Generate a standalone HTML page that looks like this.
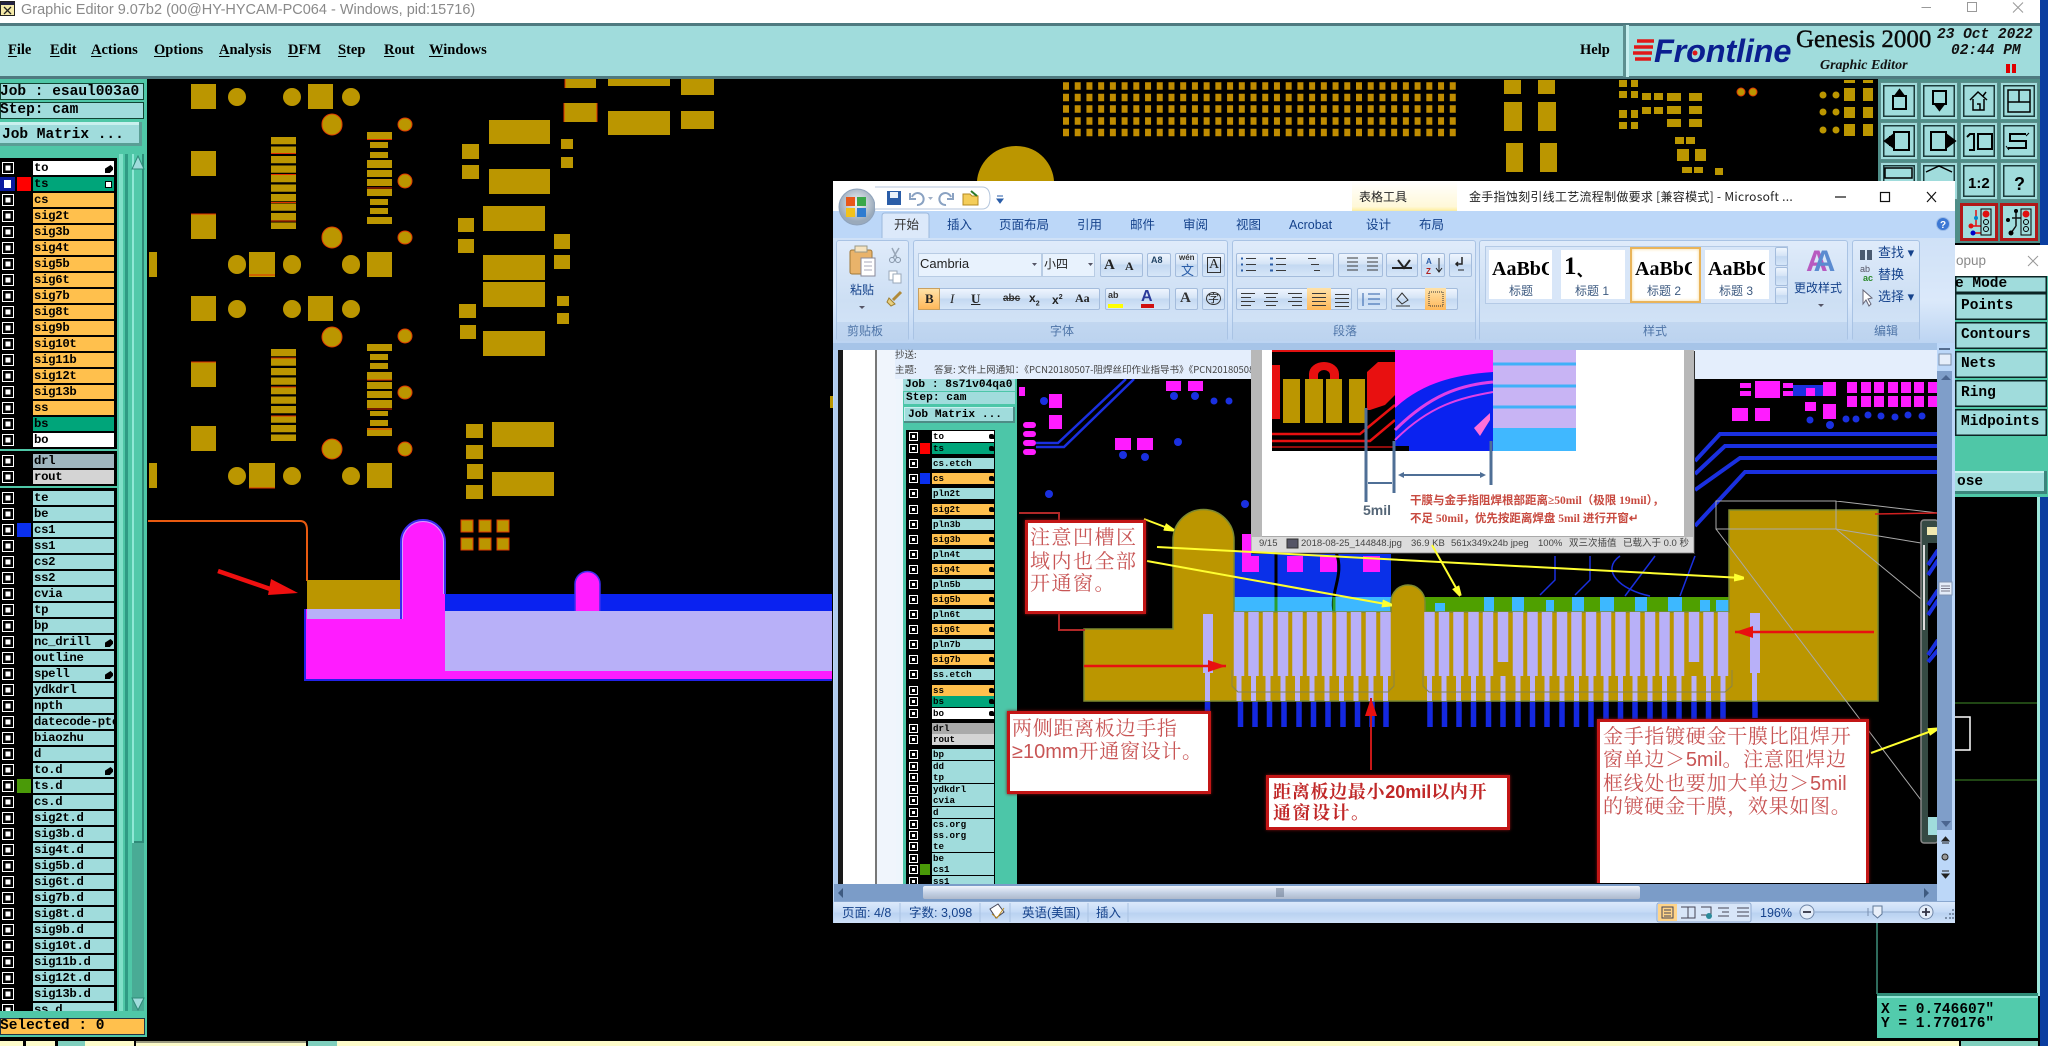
<!DOCTYPE html>
<html lang="zh"><head><meta charset="utf-8"><title>Graphic Editor</title>
<style>
html,body{margin:0;padding:0;background:#000;width:2048px;height:1046px;overflow:hidden}
div,svg,span.a{position:absolute}
svg{left:0;top:0}
.w{position:absolute;white-space:nowrap;line-height:1}
.m{font:bold 14.5px/15px "Liberation Serif",serif;color:#000;top:43px}
.m u{text-underline-offset:2px}
.j{font:bold 14.5px/17px "Liberation Mono",monospace;color:#000;white-space:nowrap;overflow:hidden;background:#a0dcdc}
.r{left:0;width:116px;height:14px}
.c{left:2px;top:1px;width:12px;height:12px;background:#fff;box-shadow:inset 0 0 0 1px #fff,inset 0 0 0 3.5px #000}
.s{left:17px;top:0;width:14px;height:14px}
.t{left:33px;top:0;width:80px;height:14px;padding-left:1px;background:#a0dcdc;font:bold 12.3px/14px "Liberation Mono",monospace;letter-spacing:-.3px;color:#000;overflow:hidden;white-space:nowrap}
.o{background:#ffc04d}.g{background:#00a57a}.wh{background:#fff}
.h{right:1px;top:4px;width:8px;height:8px;background:#000;clip-path:polygon(0 100%,0 45%,55% 10%,70% 0,100% 30%,100% 60%,60% 100%)}
.e{left:906px;width:89px;height:11px}
.e i{position:absolute;left:3px;top:1px;width:9px;height:9px;background:#fff;box-shadow:inset 0 0 0 1px #fff,inset 0 0 0 3px #000}
.e b{position:absolute;left:26px;top:0;width:62px;height:11px;background:#a0dcdc;font:bold 9.2px/11px "Liberation Mono",monospace;color:#000;padding-left:1px;box-sizing:border-box;overflow:hidden;white-space:nowrap}
.e b.o{background:#ffc04d}.e b.g{background:#00a57a}.e b.wh{background:#fff}
.e .sw{position:absolute;left:14px;top:0;width:10px;height:11px}
.e u{position:absolute;left:83px;top:3px;width:5px;height:5px;background:#000;border-radius:2px 2px 0 2px}
.tb{width:38px;height:38px;background:#a0dcdc;box-shadow:inset 0 0 0 1px #5d8f8d,inset 0 0 0 3px #a0dcdc,inset 0 0 0 4.5px #1c3a3a}
.bt{background:linear-gradient(#eef5fe,#d5e4f6 45%,#c3d8f1 50%,#d6e6f8);border:1px solid #a4bcdc;border-radius:2px;box-sizing:border-box}
.gr{background:linear-gradient(#dfebfa,#cddff4 60%,#d4e4f7);border:1px solid #a9c3e4;border-radius:3px;box-sizing:border-box}
.gt{background:linear-gradient(#c2d7f0,#bcd3ef);height:19px}
.n{font-family:"Liberation Sans","Noto Sans CJK SC",sans-serif}
.sc{font-family:"Noto Sans CJK SC","Liberation Sans",sans-serif}
.lb{font:12px/12px "Liberation Sans","Noto Sans CJK SC",sans-serif;color:#15428b}
.tab{font:12.5px/13px "Liberation Sans","Noto Sans CJK SC",sans-serif;color:#15428b;top:219px}
.gl{font:12px/12px "Liberation Sans","Noto Sans CJK SC",sans-serif;color:#4f75a8;top:325px}
.aa{font:bold 20px/24px "Liberation Serif",serif;color:#000;overflow:hidden;white-space:nowrap}
.box{background:#fff;border:3px solid #c31616;box-sizing:border-box;box-shadow:0 0 3px #801010}
.cn{font:20px/22px "Noto Serif CJK SC","Liberation Serif",serif;color:#c85555;letter-spacing:.7px;white-space:nowrap;position:absolute}
.cn span{font-family:"Liberation Sans",sans-serif;letter-spacing:0}
.st{font:9.5px/12px "Liberation Sans","Noto Sans CJK SC",sans-serif;color:#444;top:538px}
.sb{font:12.5px/14px "Liberation Sans","Noto Sans CJK SC",sans-serif;color:#15428b;top:906px}
.pb{left:1955px;width:92px;height:27px;background:#a0dcdc;box-shadow:inset 0 0 0 1.5px #0c2424;font:bold 14.5px/27px "Liberation Mono",monospace;color:#000;white-space:nowrap;overflow:hidden}
.pb span{position:absolute;left:6px}
</style></head><body>

<!-- main canvas -->
<svg width="2048" height="1046" viewBox="0 0 2048 1046">
<rect width="2048" height="1046" fill="#000"/>
<g fill="#bb9600">
<path d="M191 84H216V109H191zM308 84H333V109H308zM191 151H216V176H191zM191 214H216V239H191zM149 252H157V277H149zM249 252H275V277H249zM367 252H392V277H367zM191 296H216V321H191zM308 296H333V321H308zM191 362H216V387H191zM191 426H216V451H191zM149 463H157V488H149zM249 463H275V488H249zM367 463H392V488H367z"/>
<path d="M367 132H392V139H367zM370 142H388V148H370zM370 152H388V158H370zM367 160H392V168H367zM367 170H392V177H367zM367 179H392V186H367zM367 189H392V196H367zM370 199H388V205H370zM370 208H388V214H370zM367 217H392V224H367zM367 344H392V351H367zM370 354H388V360H370zM370 363H388V369H370zM367 372H392V380H367zM367 382H392V389H367zM367 391H392V398H367zM367 400H392V408H367zM370 411H388V416H370zM370 420H388V426H370zM367 428H392V436H367z"/>
<path d="M565 79H596V88H565zM608 79H670V86H608zM681 79H714V95H681zM564 103H597V122H564zM608 111H670V135H608zM681 111H714V129H681zM489 120H550V144H489zM561 139H573V149H561zM561 157H573V168H561zM462 144H479V159H462zM462 165H479V179H462zM489 169H550V194H489zM483 206H545V231H483zM458 218H474V232H458zM458 239H474V253H458zM554 234H570V249H554zM554 255H570V269H554zM483 255H545V280H483zM483 282H545V307H483zM459 304H476V318H459zM460 325H476V339H460zM557 296H569V306H557zM557 313H569V324H557zM483 331H545V356H483zM466 424H483V438H466zM466 445H483V459H466zM467 464H483V479H467zM466 485H483V499H466zM492 422H554V447H492zM492 472H554V496H492z"/>
<path d="M1504 80H1521V94H1504zM1538 80H1555V94H1538zM1504 102H1522V131H1504zM1538 102H1556V131H1538zM1506 143H1523V172H1506zM1540 143H1557V172H1540z"/>
<path d="M1619 80H1627V87H1619zM1631 80H1638V87H1631zM1619 91H1627V98H1619zM1631 91H1638V98H1631zM1642 93H1651V100H1642zM1654 93H1663V100H1654zM1667 93H1681V101H1667zM1689 93H1702V101H1689zM1619 110H1627V118H1619zM1631 110H1638V118H1631zM1642 107H1651V114H1642zM1654 107H1663V114H1654zM1667 106H1681V114H1667zM1689 106H1702V114H1689zM1619 122H1627V129H1619zM1631 122H1638V129H1631zM1667 119H1681V127H1667zM1689 119H1702V127H1689zM1675 137H1684V144H1675zM1686 137H1695V144H1686zM1677 149H1689V161H1677zM1695 149H1706V161H1695zM1682 167H1692V173H1682zM1694 167H1703V173H1694zM1715 168H1723V175H1715zM1844 80H1855V83H1844zM1863 80H1873V83H1863zM1844 88H1855V101H1844zM1863 88H1873V101H1863zM1844 107H1855V118H1844zM1863 107H1873V118H1863zM1844 124H1855V136H1844zM1863 124H1873V136H1863z"/>
</g>
<g fill="none" stroke="#bb9600" stroke-width="25">
<path d="M283.5 137V229" stroke-dasharray="7.2 2.3"/><path d="M283.5 349V441" stroke-dasharray="7.2 2.3"/>
</g>
<g fill="#bb9600" stroke="#e03a00" stroke-width="1">
<rect x="322" y="114" width="20" height="21" rx="10" ry="10"/><rect x="398" y="118" width="14" height="13" rx="7"/><rect x="398" y="174" width="14" height="14" rx="7"/><rect x="322" y="227" width="20" height="21" rx="10"/><rect x="398" y="231" width="14" height="13" rx="7"/><rect x="322" y="327" width="20" height="20" rx="10"/><rect x="398" y="329" width="14" height="14" rx="7"/><rect x="398" y="386" width="14" height="13" rx="7"/><rect x="322" y="439" width="20" height="20" rx="10"/><rect x="398" y="442" width="14" height="14" rx="7"/>
<path d="M461 520H473V532H461zM479 520H491V532H479zM497 520H509V532H497zM461 538H473V550H461zM479 538H491V550H479zM497 538H509V550H497z"/>
</g>
<g fill="#bb9600">
<rect x="228" y="88" width="18" height="18" rx="9"/><rect x="283" y="88" width="18" height="18" rx="9"/><rect x="342" y="88" width="18" height="18" rx="9"/>
<rect x="228" y="255" width="18" height="19" rx="9"/><rect x="283" y="255" width="18" height="19" rx="9"/><rect x="342" y="255" width="18" height="19" rx="9"/>
<rect x="228" y="300" width="18" height="18" rx="9"/><rect x="283" y="300" width="18" height="18" rx="9"/><rect x="342" y="300" width="18" height="18" rx="9"/>
<rect x="228" y="467" width="18" height="18" rx="9"/><rect x="283" y="467" width="18" height="18" rx="9"/><rect x="342" y="467" width="18" height="18" rx="9"/>
<path d="M977 181C978 165 992 146 1016 146C1040 146 1053 165 1054 181V190H977z"/>
<circle cx="1741" cy="92" r="4" stroke="#e03a00"/><circle cx="1753" cy="92" r="4" stroke="#e03a00"/>
<circle cx="1823" cy="95" r="3.5"/><circle cx="1836" cy="95" r="3.5"/><circle cx="1823" cy="112" r="3.5"/><circle cx="1836" cy="112" r="3.5"/><circle cx="1823" cy="130" r="3.5"/><circle cx="1836" cy="130" r="3.5"/>
</g>
<g fill="none" stroke-width="7.5" stroke-dasharray="6 5.72">
<path stroke="#c08c00" d="M1063 86H1460M1063 97.5H1460M1063 109H1460M1063 121H1460M1063 132.500H1460"/>
</g>
<g fill="none" stroke="#e03000" stroke-width="1">
<path d="M191 214H216M191 362H216M271 153.500H296M271 174.500H296M271 202.500H296M271 221H296M271 358H296M271 387H296M271 416H296M367 139.500H392M367 188H392M367 380H392M367 409H392M367 429H392M249 275H275M249 488H275M565 79V88M564 103V122M597 103V122"/>
</g>
<path d="M148 521H300Q307 521 307 530V581" fill="none" stroke="#e85a10" stroke-width="2"/>
<rect x="307" y="580" width="93" height="29" fill="#bb9600"/>
<rect x="305" y="609" width="527" height="71" fill="#ff1cff"/>
<path d="M305 609V680H832" fill="none" stroke="#2222e8" stroke-width="2"/>
<rect x="307" y="609" width="93" height="10" fill="#b8b0f8"/>
<rect x="445" y="594" width="387" height="17" fill="#0a22f0"/>
<rect x="444" y="611" width="388" height="60" fill="#b8b0f8"/>
<path d="M401 620V542A22 22 0 0 1 445 542V673H401z" fill="#ff1cff"/>
<path d="M401 619V542A22 22 0 0 1 445 542V594" fill="none" stroke="#3a2cf0" stroke-width="2"/>
<path d="M402.500 619V542A20.500 20.500 0 0 1 443.500 542V594" fill="none" stroke="#d0a0ff" stroke-width="1"/>
<path d="M575 611V584A12.500 12.500 0 0 1 600 584V611z" fill="#ff1cff"/>
<path d="M575 611V584A12.500 12.500 0 0 1 600 584V611" fill="none" stroke="#3a2cf0" stroke-width="1.500"/>
<path d="M218 571L276 591" stroke="#f01010" stroke-width="4.500"/><path d="M298 593L271 579L268 595z" fill="#f01010"/>
<rect x="830" y="396" width="3" height="12" fill="#bb9600"/>
<!-- canvas right -->
<path d="M1955 703H2037M1955 780H2037" stroke="#3f8c28" stroke-width="1"/>
<path d="M1955 717H1970V750H1955" fill="none" stroke="#fff" stroke-width="1.500"/>
<path d="M1877 923V994" stroke="#3d8f7a" stroke-width="1.500"/>
</svg>

<!-- title bar -->
<div style="left:0;top:0;width:2040px;height:23px;background:#fff"></div>
<div style="left:2040px;top:0;width:8px;height:1046px;background:#0a3ea0"></div>
<svg width="16" height="16" style="left:0;top:1px"><rect x=".5" y=".5" width="14" height="14" fill="#f4e9a8" stroke="#222"/><rect x="1" y="1" width="13" height="3" fill="#224"/><path d="M4 6L11 13M11 6L4 13" stroke="#222" stroke-width="1.300"/></svg>
<span class="w n" style="left:21px;top:3px;font-size:14.500px;color:#8a8a8a">Graphic Editor 9.07b2 (00@HY-HYCAM-PC064 - Windows, pid:15716)</span>
<svg width="2048" height="23"><path d="M1921.500 7.500H1931" stroke="#999"/><rect x="1967.500" y="2.500" width="9" height="9" fill="none" stroke="#999"/><path d="M2013 2.500L2023 12.500M2023 2.500L2013 12.500" stroke="#999"/></svg>

<!-- menu bar -->
<div style="left:0;top:23px;width:2040px;height:3px;background:#4f7a80"></div>
<div style="left:0;top:26px;width:2040px;height:50px;background:#a0dcdc"></div>
<div style="left:0;top:76px;width:2040px;height:3px;background:#4f7a80"></div>
<div style="left:1623px;top:25px;width:3px;height:52px;background:#5d8f90"></div>
<div style="left:1626px;top:25px;width:3px;height:52px;background:#c6efef"></div>
<span class="w m" style="left:8px"><u>F</u>ile</span>
<span class="w m" style="left:50px"><u>E</u>dit</span>
<span class="w m" style="left:91px"><u>A</u>ctions</span>
<span class="w m" style="left:154px"><u>O</u>ptions</span>
<span class="w m" style="left:219px"><u>A</u>nalysis</span>
<span class="w m" style="left:288px"><u>D</u>FM</span>
<span class="w m" style="left:338px"><u>S</u>tep</span>
<span class="w m" style="left:384px"><u>R</u>out</span>
<span class="w m" style="left:429px"><u>W</u>indows</span>
<span class="w m" style="left:1580px">Help</span>

<!-- logo -->
<svg width="2048" height="80"><path d="M1637 41H1654M1634 47H1653M1633 53H1652M1635 59H1651" stroke="#e01818" stroke-width="3.500"/></svg>
<span class="w" style="left:1654px;top:34px;font:italic bold 32.500px/34px 'Liberation Sans',sans-serif;color:#0b1f90;letter-spacing:-.2px">Frontline</span>
<svg width="2048" height="80"><circle cx="1695" cy="53" r="2.500" fill="#e01818"/></svg>
<span class="w" style="left:1796px;top:27px;font:25px/26px 'Liberation Serif',serif;color:#0a0a0a;-webkit-text-stroke:.4px #0a0a0a">Genesis 2000</span>
<span class="w" style="left:1820px;top:58px;font:italic bold 14px/15px 'Liberation Serif',serif;color:#111">Graphic Editor</span>
<span class="w" style="left:1937px;top:27px;font:italic bold 14.500px/16px 'Liberation Mono',monospace;color:#111">23 Oct 2022</span>
<span class="w" style="left:1951px;top:43px;font:italic bold 14.500px/16px 'Liberation Mono',monospace;color:#111">02:44 PM</span>
<div style="left:2006px;top:64px;width:4px;height:9px;background:#e00000"></div><div style="left:2012px;top:64px;width:4px;height:9px;background:#e00000"></div>

<!-- left panel -->
<div style="left:0;top:79px;width:147px;height:958px;background:#4fc7a7"></div>
<div class="j" style="left:0;top:83px;width:144px;height:17px;box-shadow:inset 0 0 0 1px #143;"><span class="a" style="left:0;top:1px">Job : esaul003a0</span></div>
<div class="j" style="left:0;top:102px;width:144px;height:17px;box-shadow:inset 0 0 0 1px #143"><span class="a" style="left:0">Step: cam</span></div>
<div class="j" style="left:0;top:122px;width:142px;height:24px;line-height:24px;box-shadow:inset -3px -3px 0 #5a9e95,inset 0 3px 0 #c8f0ee"><span class="a" style="left:2px;top:1px">Job Matrix ...</span></div>
<div style="left:0;top:158px;width:117px;height:291px;background:#000"></div>
<div style="left:0;top:451px;width:117px;height:35px;background:#000"></div>
<div style="left:0;top:488px;width:117px;height:523px;background:#000"></div>
<div style="left:119px;top:154px;width:4px;height:857px;background:#7fe0c8"></div>
<div style="left:125px;top:154px;width:3px;height:857px;background:#2f9b84"></div>
<div style="left:132px;top:154px;width:12px;height:857px;background:#49ab95"></div>
<div style="left:132px;top:154px;width:12px;height:689px;background:#52c9aa;box-shadow:inset 2px 0 0 #8fe8d6,inset -2px -2px 0 #2f8a78"></div>
<svg width="147" height="1040"><path d="M138 156L144 169H132z" fill="#a0dcdc" stroke="#2f8a78"/><path d="M138 1010L144 998H132z" fill="#a0dcdc" stroke="#2f8a78"/></svg>

<div class="r" style="top:161px"><div class="c"></div><div class="t wh">to<div class="h"></div></div></div>
<div class="r" style="top:177px"><div style="left:0;top:0;width:15px;height:14px;background:#0a1aa0"></div><div class="c" style="box-shadow:none;left:4px;top:3px;width:7px;height:8px"></div><div class="s" style="background:#f00"></div><div class="t g">ts<div style="right:2px;top:4px;width:5px;height:5px;border:1px solid #000;background:#fff"></div></div></div>
<div class="r" style="top:193px"><div class="c"></div><div class="t o">cs</div></div>
<div class="r" style="top:209px"><div class="c"></div><div class="t o">sig2t</div></div>
<div class="r" style="top:225px"><div class="c"></div><div class="t o">sig3b</div></div>
<div class="r" style="top:241px"><div class="c"></div><div class="t o">sig4t</div></div>
<div class="r" style="top:257px"><div class="c"></div><div class="t o">sig5b</div></div>
<div class="r" style="top:273px"><div class="c"></div><div class="t o">sig6t</div></div>
<div class="r" style="top:289px"><div class="c"></div><div class="t o">sig7b</div></div>
<div class="r" style="top:305px"><div class="c"></div><div class="t o">sig8t</div></div>
<div class="r" style="top:321px"><div class="c"></div><div class="t o">sig9b</div></div>
<div class="r" style="top:337px"><div class="c"></div><div class="t o">sig10t</div></div>
<div class="r" style="top:353px"><div class="c"></div><div class="t o">sig11b</div></div>
<div class="r" style="top:369px"><div class="c"></div><div class="t o">sig12t</div></div>
<div class="r" style="top:385px"><div class="c"></div><div class="t o">sig13b</div></div>
<div class="r" style="top:401px"><div class="c"></div><div class="t o">ss</div></div>
<div class="r" style="top:417px"><div class="c"></div><div class="t g">bs</div></div>
<div class="r" style="top:433px"><div class="c"></div><div class="t wh">bo</div></div>
<div class="r" style="top:454px"><div class="c"></div><div class="t" style="background:#9fb6bf">drl</div></div>
<div class="r" style="top:470px"><div class="c"></div><div class="t" style="background:#d4d4d4">rout</div></div>
<div class="r" style="top:491px"><div class="c"></div><div class="t">te</div></div>
<div class="r" style="top:507px"><div class="c"></div><div class="t">be</div></div>
<div class="r" style="top:523px"><div class="c"></div><div class="s" style="background:#0a30f0"></div><div class="t">cs1</div></div>
<div class="r" style="top:539px"><div class="c"></div><div class="t">ss1</div></div>
<div class="r" style="top:555px"><div class="c"></div><div class="t">cs2</div></div>
<div class="r" style="top:571px"><div class="c"></div><div class="t">ss2</div></div>
<div class="r" style="top:587px"><div class="c"></div><div class="t">cvia</div></div>
<div class="r" style="top:603px"><div class="c"></div><div class="t">tp</div></div>
<div class="r" style="top:619px"><div class="c"></div><div class="t">bp</div></div>
<div class="r" style="top:635px"><div class="c"></div><div class="t">nc_drill<div class="h"></div></div></div>
<div class="r" style="top:651px"><div class="c"></div><div class="t">outline</div></div>
<div class="r" style="top:667px"><div class="c"></div><div class="t">spell<div class="h"></div></div></div>
<div class="r" style="top:683px"><div class="c"></div><div class="t">ydkdrl</div></div>
<div class="r" style="top:699px"><div class="c"></div><div class="t">npth</div></div>
<div class="r" style="top:715px"><div class="c"></div><div class="t">datecode-ptc</div></div>
<div class="r" style="top:731px"><div class="c"></div><div class="t">biaozhu</div></div>
<div class="r" style="top:747px"><div class="c"></div><div class="t">d</div></div>
<div class="r" style="top:763px"><div class="c"></div><div class="t">to.d<div class="h"></div></div></div>
<div class="r" style="top:779px"><div class="c"></div><div class="s" style="background:#4a9a08"></div><div class="t">ts.d</div></div>
<div class="r" style="top:795px"><div class="c"></div><div class="t">cs.d</div></div>
<div class="r" style="top:811px"><div class="c"></div><div class="t">sig2t.d</div></div>
<div class="r" style="top:827px"><div class="c"></div><div class="t">sig3b.d</div></div>
<div class="r" style="top:843px"><div class="c"></div><div class="t">sig4t.d</div></div>
<div class="r" style="top:859px"><div class="c"></div><div class="t">sig5b.d</div></div>
<div class="r" style="top:875px"><div class="c"></div><div class="t">sig6t.d</div></div>
<div class="r" style="top:891px"><div class="c"></div><div class="t">sig7b.d</div></div>
<div class="r" style="top:907px"><div class="c"></div><div class="t">sig8t.d</div></div>
<div class="r" style="top:923px"><div class="c"></div><div class="t">sig9b.d</div></div>
<div class="r" style="top:939px"><div class="c"></div><div class="t">sig10t.d</div></div>
<div class="r" style="top:955px"><div class="c"></div><div class="t">sig11b.d</div></div>
<div class="r" style="top:971px"><div class="c"></div><div class="t">sig12t.d</div></div>
<div class="r" style="top:987px"><div class="c"></div><div class="t">sig13b.d</div></div>
<div class="r" style="top:1003px;height:8px;overflow:hidden"><div class="c"></div><div class="t">ss.d</div></div>
<div style="left:0;top:1011px;width:147px;height:5px;background:#4fc7a7"></div>
<div class="j" style="left:0;top:1018px;width:145px;height:17px;background:#ffc04d;box-shadow:inset 0 0 0 1px #234"><span class="a" style="left:0">Selected : 0</span></div>

<!-- bottom strip -->
<div style="left:0;top:1041px;width:1959px;height:5px;background:#fdfccb"></div>
<div style="left:23px;top:1041px;width:3px;height:5px;background:#000"></div>
<div style="left:55px;top:1041px;width:3px;height:5px;background:#000"></div>
<div style="left:58px;top:1041px;width:27px;height:5px;background:#7fcfbd"></div>
<div style="left:134px;top:1041px;width:2px;height:5px;background:#000"></div>
<div style="left:136px;top:1041px;width:170px;height:2px;background:#9a9a80"></div>
<div style="left:306px;top:1041px;width:2px;height:5px;background:#000"></div>
<div style="left:308px;top:1041px;width:29px;height:5px;background:#7fcfbd"></div>
<div style="left:1961px;top:1041px;width:77px;height:5px;background:#7fcfbd"></div>

<!-- toolbox -->
<div style="left:1878px;top:79px;width:162px;height:164px;background:#4f8e88"></div>
<div class="tb" style="left:1880px;top:82px"></div><div class="tb" style="left:1920px;top:82px"></div><div class="tb" style="left:1960px;top:82px"></div><div class="tb" style="left:2000px;top:82px"></div>
<div class="tb" style="left:1880px;top:122px"></div><div class="tb" style="left:1920px;top:122px"></div><div class="tb" style="left:1960px;top:122px"></div><div class="tb" style="left:2000px;top:122px"></div>
<div class="tb" style="left:1880px;top:162px"></div><div class="tb" style="left:1920px;top:162px"></div><div class="tb" style="left:1960px;top:162px"></div><div class="tb" style="left:2000px;top:162px"></div>
<div class="tb" style="left:1960px;top:203px;background:#a0dcdc;box-shadow:inset 0 0 0 3px #b01818"></div><div class="tb" style="left:2000px;top:203px;box-shadow:inset 0 0 0 3px #b01818"></div>
<svg width="2048" height="250" fill="none" stroke="#000" stroke-width="2">
<path d="M1893 96H1906V109H1893z"/><path d="M1899.500 90L1904 96H1895z" fill="#000"/>
<path d="M1933 91H1946V104H1933z"/><path d="M1939.500 110L1935 104H1944z" fill="#000"/>
<path d="M1970 100L1978 92L1987 100M1973 99V110H1984V99M1977 104H1980V110M1986 92L1983 96" stroke-width="1.500"/>
<path d="M2008 90H2030V112H2008zM2019 90V102M2008 102H2030" stroke-width="1.500"/>
<path d="M1894 132H1909V150H1894z"/><path d="M1885 141L1893 135V147z" fill="#000"/><rect x="1890" y="137" width="4" height="8" fill="#000"/>
<path d="M1931 132H1946V150H1931z"/><path d="M1955 141L1947 135V147z" fill="#000"/>
<path d="M1978 134H1992V149H1978zM1967 137L1970 134H1974V150H1969" />
<path d="M2026 134H2010V141H2026V148H2008" /><path d="M2029 133L2026 136M2006 146L2009 150" stroke-width="1"/>
<text x="1968" y="188" font-family="Liberation Sans" font-size="15" font-weight="bold" fill="#000" stroke="none">1:2</text>
<text x="2014" y="190" font-family="Liberation Sans" font-size="18" font-weight="bold" fill="#000" stroke="none">?</text>
<path d="M1885 168H1912V178H1885zM1926 172L1939 166L1952 172" stroke-width="1.500"/>
<!-- pcb -->
<path d="M1967 209H1992V236H1967z" stroke="none" fill="#a0dcdc"/>
<path d="M1976 210V226M1969 226H1982V233M1974 233H1982" stroke="#e01010" stroke-width="1.500"/>
<circle cx="1976" cy="218" r="2" fill="#08c" stroke="none"/><circle cx="1971" cy="226" r="2.500" fill="#e01010" stroke="none"/><circle cx="1973" cy="233" r="2.500" fill="#00c" stroke="none"/>
<rect x="1981" y="209" width="10" height="26" fill="#a0dcdc" stroke="#000" stroke-width="1"/><circle cx="1986" cy="214" r="3.500" fill="#e01010" stroke="none"/><circle cx="1986" cy="222" r="2.500" stroke-width="1"/><circle cx="1986" cy="229" r="2.500" stroke-width="1"/>
<path d="M2016 209V226M2011 233L2016 226M2012 218H2022" stroke="#111" stroke-width="1.500"/>
<circle cx="2016" cy="211" r="2" fill="#000" stroke="none"/><circle cx="2008" cy="220" r="2" fill="#000" stroke="none"/><circle cx="2011" cy="233" r="2.500" fill="#000" stroke="none"/>
<rect x="2021" y="209" width="10" height="26" fill="#a0dcdc" stroke="#000" stroke-width="1"/><circle cx="2026" cy="214" r="3.500" fill="#e01010" stroke="none"/><circle cx="2026" cy="222" r="2.500" stroke-width="1"/><circle cx="2026" cy="229" r="2.500" stroke-width="1"/>
</svg>

<!-- popup -->
<div style="left:1955px;top:245px;width:93px;height:31px;background:#fff"></div>
<span class="w n" style="left:1956px;top:254px;font-size:13.500px;color:#8a8a8a">opup</span>
<svg width="2048" height="280"><path d="M2028 256L2038 266M2038 256L2028 266" stroke="#999"/></svg>
<div style="left:1955px;top:276px;width:93px;height:221px;background:#4fc7a7"></div>
<div class="pb" style="top:276px;height:17px;line-height:17px;width:92px"><span style="left:0">e Mode</span></div>
<div class="pb" style="top:293px"><span>Points</span></div>
<div class="pb" style="top:322px"><span>Contours</span></div>
<div class="pb" style="top:351px"><span>Nets</span></div>
<div class="pb" style="top:380px"><span>Ring</span></div>
<div class="pb" style="top:409px"><span>Midpoints</span></div>
<div class="pb" style="top:471px;height:23px;line-height:23px;box-shadow:inset -3px -3px 0 #3c857c,inset 0 2px 0 #c8f0ee"><span style="left:2px">ose</span></div>
<div style="left:2037px;top:497px;width:3px;height:499px;background:#9fe8dc"></div>

<!-- XY box -->
<div style="left:1877px;top:993px;width:161px;height:45px;background:#52cbac;box-shadow:inset 0 3px 0 #2f8d78,inset 0 5px 0 #8fe8d6"></div>
<span class="w" style="left:1881px;top:1002px;font:bold 14.500px/16px 'Liberation Mono',monospace;color:#000">X = 0.746607"</span>
<span class="w" style="left:1881px;top:1016px;font:bold 14.500px/16px 'Liberation Mono',monospace;color:#000">Y = 1.770176"</span>

<!-- Word window -->
<div style="left:833px;top:181px;width:1122px;height:742px;background:#bcd7f8"></div>
<div style="left:833px;top:181px;width:1122px;height:30px;background:#fff"></div>
<div style="left:1352px;top:181px;width:105px;height:57px;background:linear-gradient(#fff 0,#fff8d8 45%,#ffeea0 52%,#bcd7f8 53%,#bcd7f8 100%)"></div>
<div style="left:833px;top:238px;width:1122px;height:105px;background:linear-gradient(#cfe1f7,#dbe9fa 60%,#bcd4f2)"></div>
<div style="left:833px;top:343px;width:1122px;height:7px;background:#a6c4e8"></div>
<svg width="2048" height="240">
<defs><radialGradient id="ob" cx=".5" cy=".4"><stop offset="0" stop-color="#f4f6f8"/><stop offset="1" stop-color="#9aaabb"/></radialGradient></defs>
<circle cx="857" cy="207" r="18" fill="url(#ob)" stroke="#8ea2bb"/>
<rect x="846" y="197" width="9" height="9" fill="#e8571a"/><rect x="857" y="197" width="9" height="9" fill="#39a84a"/><rect x="846" y="208" width="9" height="9" fill="#f2c21b"/><rect x="857" y="208" width="9" height="9" fill="#2f7cd0"/>
<path d="M875 187H982Q990 187 990 198Q990 209 982 209H875" fill="#fff" stroke="#b4c6dd"/>
<rect x="887" y="191" width="14" height="14" fill="#2a5da8"/><rect x="890" y="192" width="8" height="6" fill="#e9f1fa"/>
<path d="M912 197A6 6 0 1 1 917 205M910 193V199H916" fill="none" stroke="#8aa2c2" stroke-width="2"/><path d="M928 197H933L930.500 200z" fill="#a0b0c6"/>
<path d="M951 197A6 6 0 1 0 946 205M953 193V199H947" fill="none" stroke="#8aa2c2" stroke-width="2"/>
<path d="M963 194H970L972 196H978V205H963z" fill="#f4cd5a" stroke="#b48a20"/><path d="M971 191L977 196" stroke="#2a7a2a" stroke-width="2"/>
<path d="M997 196H1003M997 199H1003L1000 203z" fill="#2a5da8" stroke="#2a5da8"/>
<path d="M1835 197H1846" stroke="#111" stroke-width="1.200"/><rect x="1880.500" y="192.500" width="9" height="9" fill="none" stroke="#111" stroke-width="1.200"/><path d="M1927 192L1936 202M1936 192L1927 202" stroke="#111" stroke-width="1.200"/>
<circle cx="1943" cy="224" r="6.500" fill="#3c78d4" stroke="#9cbce8"/>
<text x="1940" y="228" font-family="Liberation Sans" font-size="10" font-weight="bold" fill="#fff">?</text>
<path d="M882 238V216Q882 213 885 213H926Q929 213 929 216V238" fill="#dce9fa" stroke="#9db9dc"/>
</svg>
<span class="w sc" style="left:1359px;top:191px;font-size:12px;color:#222">表格工具</span>
<span class="w sc" style="left:1469px;top:191px;font-size:12px;color:#222;letter-spacing:.28px">金手指蚀刻引线工艺流程制做要求 [兼容模式] - Microsoft ...</span>
<span class="w tab" style="left:894px;color:#333">开始</span>
<span class="w tab" style="left:947px">插入</span>
<span class="w tab" style="left:999px">页面布局</span>
<span class="w tab" style="left:1077px">引用</span>
<span class="w tab" style="left:1130px">邮件</span>
<span class="w tab" style="left:1183px">审阅</span>
<span class="w tab" style="left:1236px">视图</span>
<span class="w tab" style="left:1289px">Acrobat</span>
<span class="w tab" style="left:1366px">设计</span>
<span class="w tab" style="left:1419px">布局</span>

<!-- ribbon groups -->
<div class="gr" style="left:836px;top:240px;width:73px;height:101px"></div>
<div class="gr" style="left:913px;top:240px;width:315px;height:101px"></div>
<div class="gr" style="left:1232px;top:240px;width:244px;height:101px"></div>
<div class="gr" style="left:1479px;top:240px;width:369px;height:101px"></div>
<div class="gr" style="left:1852px;top:240px;width:68px;height:101px"></div>
<div class="gt" style="left:837px;top:322px;width:71px"></div><div class="gt" style="left:914px;top:322px;width:313px"></div><div class="gt" style="left:1233px;top:322px;width:242px"></div><div class="gt" style="left:1480px;top:322px;width:367px"></div><div class="gt" style="left:1853px;top:322px;width:66px"></div>
<span class="w gl" style="left:847px">剪贴板</span>
<span class="w gl" style="left:1050px">字体</span>
<span class="w gl" style="left:1333px">段落</span>
<span class="w gl" style="left:1643px">样式</span>
<span class="w gl" style="left:1874px">编辑</span>
<!-- font row -->
<div style="left:918px;top:253px;width:124px;height:24px;background:#e8f2fd;border:1px solid #b8cce4;box-sizing:border-box"></div>
<div style="left:1042px;top:253px;width:53px;height:24px;background:#e8f2fd;border:1px solid #b8cce4;box-sizing:border-box"></div>
<span class="w n" style="left:920px;top:257px;font-size:13px;color:#222">Cambria</span>
<span class="w sc" style="left:1044px;top:258px;font-size:12px;color:#222">小四</span>
<div class="bt" style="left:1100px;top:253px;width:43px;height:24px"></div>
<div class="bt" style="left:1147px;top:253px;width:24px;height:24px"></div>
<div class="bt" style="left:1175px;top:253px;width:23px;height:24px"></div>
<div class="bt" style="left:1202px;top:253px;width:23px;height:24px"></div>
<div class="bt" style="left:918px;top:288px;width:182px;height:22px"></div>
<div style="left:918px;top:288px;width:22px;height:22px;background:linear-gradient(#ffe2a8,#ffb85a);border:1px solid #c9a060;box-sizing:border-box"></div>
<div class="bt" style="left:1105px;top:288px;width:65px;height:22px"></div>
<div class="bt" style="left:1175px;top:288px;width:23px;height:22px"></div>
<div class="bt" style="left:1202px;top:288px;width:23px;height:22px"></div>
<span class="w" style="left:1104px;top:258px;font:bold 15px/15px 'Liberation Serif',serif;color:#222">A</span>
<span class="w" style="left:1125px;top:260px;font:bold 12px/12px 'Liberation Serif',serif;color:#222">A</span>
<span class="w" style="left:1151px;top:256px;font:bold 9px/9px 'Liberation Sans',sans-serif;color:#246">A8</span>
<span class="w" style="left:1179px;top:254px;font:bold 8px/8px 'Liberation Sans',sans-serif;color:#333">wén</span>
<span class="w sc" style="left:1181px;top:263px;font-size:13px;color:#2a5da8">文</span>
<span class="w" style="left:1207px;top:257px;font:14px/14px 'Liberation Serif',serif;color:#222;border:1px solid #333;padding:0 1px">A</span>
<span class="w" style="left:925px;top:292px;font:bold 13px/13px 'Liberation Serif',serif;color:#222">B</span>
<span class="w" style="left:950px;top:292px;font:italic 13px/13px 'Liberation Serif',serif;color:#222">I</span>
<span class="w" style="left:971px;top:292px;font:bold 13px/13px 'Liberation Serif',serif;color:#222;text-decoration:underline">U</span>
<span class="w" style="left:1003px;top:294px;font:bold 10px/10px 'Liberation Sans',sans-serif;color:#333;text-decoration:line-through">abc</span>
<span class="w" style="left:1029px;top:292px;font:bold 12px/12px 'Liberation Sans',sans-serif;color:#222">x<sub style="font-size:7px">2</sub></span>
<span class="w" style="left:1052px;top:292px;font:bold 12px/12px 'Liberation Sans',sans-serif;color:#222">x<sup style="font-size:7px">2</sup></span>
<span class="w" style="left:1075px;top:292px;font:bold 12px/12px 'Liberation Serif',serif;color:#222">Aa</span>
<span class="w" style="left:1108px;top:290px;font:bold 9px/10px 'Liberation Sans',sans-serif;color:#333">ab</span>
<div style="left:1108px;top:304px;width:15px;height:4px;background:#ff0"></div>
<span class="w" style="left:1141px;top:289px;font:bold 16px/15px 'Liberation Sans',sans-serif;color:#2a3a9a">A</span>
<div style="left:1141px;top:304px;width:13px;height:4px;background:#d01010"></div>
<span class="w" style="left:1180px;top:291px;font:bold 15px/15px 'Liberation Serif',serif;color:#333">A</span>
<span class="w sc" style="left:1206px;top:292px;font-size:11px;color:#222;border:1px solid #333;border-radius:50%;padding:0 1px">字</span>
<!-- paragraph row -->
<div class="bt" style="left:1236px;top:253px;width:98px;height:24px"></div>
<div class="bt" style="left:1338px;top:253px;width:45px;height:24px"></div>
<div class="bt" style="left:1386px;top:253px;width:32px;height:24px"></div>
<div class="bt" style="left:1421px;top:253px;width:24px;height:24px"></div>
<div class="bt" style="left:1449px;top:253px;width:23px;height:24px"></div>
<div class="bt" style="left:1236px;top:288px;width:116px;height:22px"></div>
<div style="left:1307px;top:288px;width:24px;height:22px;background:linear-gradient(#ffe2a8,#ffb85a)"></div>
<div class="bt" style="left:1357px;top:288px;width:30px;height:22px"></div>
<div class="bt" style="left:1391px;top:288px;width:67px;height:22px"></div>
<div style="left:1425px;top:288px;width:21px;height:22px;background:linear-gradient(#ffe2a8,#ffb85a)"></div>
<svg width="2048" height="350" fill="none" stroke="#3a3a3a" stroke-width="1">
<path d="M1246 258.500H1256M1246 264.500H1256M1246 270.500H1256M1276 258.500H1286M1276 264.500H1286M1276 270.500H1286M1308 258.500H1316M1311 264.500H1319M1314 270.500H1320M1347 258H1358M1347 262H1358M1347 266H1358M1347 270H1358M1367 258H1378M1367 262H1378M1367 266H1378M1367 270H1378"/>
<path d="M1241 258.500H1243M1241 264.500H1243M1241 270.500H1243M1270 258.500H1273M1270 264.500H1273M1270 270.500H1273" stroke="#2a5da8" stroke-width="2"/>
<path d="M1241 293.500H1255M1241 297.500H1251M1241 301.500H1255M1241 305.500H1251M1264 293.500H1278M1266 297.500H1276M1264 301.500H1278M1266 305.500H1276M1288 293.500H1302M1292 297.500H1302M1288 301.500H1302M1292 305.500H1302M1312 293.500H1326M1312 297.500H1326M1312 301.500H1326M1312 305.500H1326M1335 294.500H1349M1335 298.500H1349M1335 302.500H1349M1335 306.500H1349" />
<path d="M1368 294H1380M1368 299H1380M1368 304H1380M1363 293V306" stroke="#2a5da8"/>
<path d="M1398 260L1404 268L1410 260M1392 268H1412" stroke="#222" stroke-width="2"/>
<text x="1426" y="264" font-family="Liberation Sans" font-size="8" font-weight="bold" fill="#2a5da8" stroke="none">A</text><text x="1426" y="274" font-family="Liberation Sans" font-size="8" font-weight="bold" fill="#b02020" stroke="none">Z</text><path d="M1439 258V272M1436 268L1439 272L1442 268" stroke="#222"/>
<path d="M1462 257V264H1456M1458 262L1456 264L1458 266" stroke="#222" stroke-width="1.500"/><path d="M1458 270L1464 270" stroke="#222"/>
<path d="M1402 293L1408 300L1402 304L1397 299zM1396 306H1410" stroke="#333"/>
<rect x="1429" y="292" width="14" height="14" stroke="#333" stroke-dasharray="1 1"/>
<!-- clipboard -->
<rect x="850" y="250" width="22" height="24" rx="2" fill="#e9b36a" stroke="#a07838"/><rect x="855" y="246" width="12" height="6" fill="#f6e4c0" stroke="#998"/>
<path d="M861 258H875V276H861z" fill="#fff" stroke="#889"/><path d="M864 262H872M864 266H872M864 270H872" stroke="#aab"/>
<path d="M892 248L897 258M899 248L893 258" stroke="#99a7b8" stroke-width="1.500"/><circle cx="892" cy="260" r="2.500" stroke="#8595a8"/><circle cx="898" cy="260" r="2.500" stroke="#8595a8"/>
<rect x="889" y="271" width="8" height="9" fill="#fff" stroke="#9aa8ba"/><rect x="893" y="274" width="8" height="9" fill="#fff" stroke="#9aa8ba"/>
<path d="M901 292L893 300" stroke="#b08a3a" stroke-width="3"/><path d="M889 298L895 304L891 306L887 302z" fill="#e8d080" stroke="#a08030"/>
<path d="M859 306H865L862 309z" fill="#556" stroke="none"/>
<path d="M1032 263H1037L1034.500 266zM1088 263H1093L1090.500 266z" fill="#556" stroke="none"/>
</svg>
<span class="w lb" style="left:850px;top:284px">粘贴</span>
<!-- styles -->
<div style="left:1485px;top:246px;width:303px;height:58px;background:#d8e6f8;border:1px solid #b4cae6;box-sizing:border-box"></div>
<div style="left:1489px;top:250px;width:63px;height:49px;background:#fff"></div>
<div style="left:1561px;top:250px;width:64px;height:49px;background:#fff"></div>
<div style="left:1630px;top:247px;width:71px;height:56px;background:#fff;border:2px solid #e9b45a;box-sizing:border-box;box-shadow:inset 0 0 3px #f8d890"></div>
<div style="left:1705px;top:250px;width:64px;height:49px;background:#fff"></div>
<div class="aa" style="left:1492px;top:257px;width:57px">AaBbC</div>
<div class="w" style="left:1564px;top:254px;font:bold 25px/26px 'Liberation Serif',serif;color:#000">1<span style="font-size:16px;position:relative;top:2px;font-family:'Noto Sans CJK SC'">、</span></div>
<div class="aa" style="left:1635px;top:257px;width:57px">AaBbC</div>
<div class="aa" style="left:1708px;top:257px;width:57px">AaBbC</div>
<span class="w lb" style="left:1509px;top:285px;color:#3d5a80">标题</span>
<span class="w lb" style="left:1575px;top:285px;color:#3d5a80">标题 1</span>
<span class="w lb" style="left:1647px;top:285px;color:#3d5a80">标题 2</span>
<span class="w lb" style="left:1719px;top:285px;color:#3d5a80">标题 3</span>
<div class="bt" style="left:1775px;top:247px;width:13px;height:19px"></div><div class="bt" style="left:1775px;top:267px;width:13px;height:19px"></div><div class="bt" style="left:1775px;top:287px;width:13px;height:17px"></div>
<span class="w" style="left:1806px;top:247px;font:bold 30px/30px 'Liberation Sans',sans-serif;color:#b85ac0;letter-spacing:-14px">A<span style="color:#5b8bd0">A</span></span>
<span class="w lb" style="left:1794px;top:282px;font-size:12px">更改样式</span>
<span class="w lb" style="left:1878px;top:247px;font-size:13px">查找 ▾</span>
<span class="w lb" style="left:1878px;top:269px;font-size:13px">替换</span>
<span class="w lb" style="left:1878px;top:291px;font-size:13px">选择 ▾</span>
<svg width="2048" height="350"><path d="M1818 304H1824L1821 307z" fill="#556"/><rect x="1860" y="250" width="5" height="10" fill="#4a5a70"/><rect x="1867" y="250" width="5" height="10" fill="#4a5a70"/><text x="1860" y="272" font-family="Liberation Sans" font-size="9" fill="#556">ab</text><text x="1863" y="281" font-family="Liberation Sans" font-size="9" font-weight="bold" fill="#2a8a2a">ac</text><path d="M1863 290V304L1866 300L1869 306L1871 304L1868 299L1872 298z" fill="#fff" stroke="#667"/></svg>

<!-- document -->
<div style="left:834px;top:350px;width:4px;height:534px;background:#b0ccee"></div>
<div style="left:838px;top:350px;width:5px;height:534px;background:#181818"></div>
<div style="left:843px;top:350px;width:32px;height:534px;background:#fff"></div>
<div style="left:875px;top:350px;width:2px;height:534px;background:#777"></div>
<div style="left:877px;top:350px;width:60px;height:534px;background:#f0f5fc"></div>
<div style="left:895px;top:350px;width:1042px;height:29px;background:#e4eefc"></div>
<span class="w sc" style="left:895px;top:350px;font-size:9.500px;color:#444">抄送:</span>
<span class="w sc" style="left:895px;top:365px;font-size:9.500px;color:#444">主题:</span>
<div class="w sc" style="left:934px;top:365px;width:317px;overflow:hidden;font-size:9.500px;color:#444">答复: 文件上网通知：《PCN20180507-阻焊丝印作业指导书》《PCN20180508</div>

<!-- embedded image -->
<svg width="2048" height="1046" style="clip-path:polygon(896px 379px,1937px 379px,1937px 884px,896px 884px)">
<defs>
<marker id="y" markerWidth="10" markerHeight="8" refX="9" refY="4" orient="auto" markerUnits="userSpaceOnUse"><path d="M0 0L15 4L0 8z" fill="#ffff30"/></marker>
<marker id="rd" markerWidth="20" markerHeight="12" refX="18" refY="6" orient="auto" markerUnits="userSpaceOnUse"><path d="M0 0L18 6L0 12z" fill="#e81010"/></marker>
</defs>
<rect x="896" y="379" width="7" height="505" fill="#eef5fc"/>
<rect x="903" y="379" width="114" height="505" fill="#4cc6a8"/>
<rect x="1017" y="379" width="920" height="505" fill="#000"/>
<!-- traces -->
<g fill="none" stroke="#1a30e0" stroke-width="4">
<path d="M1695 461L1720 434H1937M1695 474L1725 446H1937M1695 490L1740 458H1937M1695 526L1745 472H1937"/>
<path d="M1134 379L1064 447H1036M1126 379L1058 443H1036" stroke-width="2.500"/>
<path d="M1555 556V580L1540 595M1590 556V580L1575 595M1620 556C1600 570 1620 590 1650 596M1655 556L1625 596M1695 556L1680 596" stroke-width="1.500"/>
</g>
<g fill="#1a30e0">
<circle cx="1044" cy="401" r="4"/><circle cx="1178" cy="442" r="4"/><circle cx="1049" cy="494" r="4"/><circle cx="1245" cy="504" r="4"/><circle cx="1174" cy="396" r="4"/><circle cx="1195" cy="396" r="4"/><circle cx="1214" cy="401" r="3.500"/><circle cx="1229" cy="401" r="3.500"/><circle cx="1123" cy="455" r="4"/><circle cx="1145" cy="457" r="4"/>
<circle cx="1810" cy="420" r="3.500"/><circle cx="1830" cy="425" r="4"/><circle cx="1846" cy="419" r="3.500"/><circle cx="1856" cy="419" r="3.500"/><circle cx="1868" cy="415" r="3.500"/><circle cx="1881" cy="416" r="3.500"/><circle cx="1895" cy="417" r="3.500"/><circle cx="1908" cy="415" r="3.500"/><circle cx="1922" cy="416" r="3.500"/>
<path d="M1793 385H1823V396H1793z"/>
</g>
<g fill="#ff1cff">
<path d="M1019 387H1025V396H1019zM1049 394H1062V408H1049zM1049 415H1062V429H1049zM1115 438H1131V450H1115zM1137 438H1153V450H1137zM1166 381H1181V391H1166zM1188 381H1203V391H1188z"/>
<rect x="1023" y="422" width="13" height="6" rx="3"/><rect x="1023" y="431" width="13" height="6" rx="3"/><rect x="1023" y="440" width="13" height="6" rx="3"/><rect x="1023" y="449" width="13" height="6" rx="3"/>
<path d="M1755 381H1780V398H1755zM1740 383H1751V388H1740zM1740 391H1751V396H1740zM1783 383H1793V388H1783zM1783 391H1793V396H1783zM1806 388H1815V396H1806zM1823 382H1836V396H1823zM1732 408H1748V421H1732zM1755 408H1770V421H1755zM1805 402H1816V411H1805zM1823 404H1836V419H1823z"/>
<path d="M1847 382H1857V393H1847zM1861 382H1871V393H1861zM1874 382H1884V393H1874zM1888 382H1898V393H1888zM1901 382H1911V393H1901zM1914 382H1924V393H1914zM1928 382H1937V393H1928zM1847 396H1857V407H1847zM1861 396H1871V407H1861zM1874 396H1884V407H1874zM1888 396H1898V407H1888zM1901 396H1911V407H1901zM1914 396H1924V407H1914zM1928 396H1937V407H1928z"/>
</g>
<!-- blue/cyan under fingers -->
<rect x="1234" y="552" width="157" height="45" fill="#0a30e8"/>
<rect x="1234" y="597" width="157" height="15" fill="#3db8ff"/>
<path d="M1242 534H1251V556H1242zM1242 556H1259V572H1242zM1287 556H1303V572H1287zM1320 556H1337V572H1320zM1363 556H1380V572H1363z" fill="#ff1cff"/>
<path d="M1276 552V612M1336 552C1345 575 1330 590 1334 612" stroke="#000" stroke-width="3" fill="none"/><path d="M1276 597V612M1334 597V612" stroke="#2aa030" stroke-width="3"/>
<rect x="1424" y="597" width="305" height="15" fill="#4fa000"/>
<g fill="#3db8ff"><rect x="1512" y="597" width="12" height="15"/><rect x="1546" y="600" width="8" height="12"/><rect x="1572" y="597" width="12" height="15"/><rect x="1600" y="597" width="14" height="15"/><rect x="1635" y="597" width="12" height="15"/><rect x="1668" y="597" width="14" height="15"/><rect x="1700" y="600" width="10" height="12"/><rect x="1716" y="600" width="13" height="12"/><rect x="1435" y="603" width="10" height="9"/><rect x="1484" y="597" width="10" height="15"/></g>
<!-- blue finger tails -->
<path d="M1240.500 701V727M1255 701V727M1269.500 701V727M1284 701V727M1299 701V727M1313.500 701V727M1328 701V727M1343 701V727M1357.500 701V727M1372 701V727M1386 701V727M1430 701V727M1444.500 701V727M1459 701V727M1473.500 701V727M1488.500 701V727M1503 701V727M1518 701V727M1532.500 701V727M1547 701V727M1562 701V727M1576.500 701V727M1591 701V727M1606 701V727M1620.500 701V727M1635 701V727M1650 701V727M1664.500 701V727M1679 701V727M1694 701V727M1708.500 701V727M1723 701V727M1207.500 701V716M1755 701V718" stroke="#1428e0" stroke-width="5.500" fill="none"/>
<!-- gold -->
<path d="M1084 629H1173V540A30.500 30.500 0 0 1 1234 540V612H1391V602A17 17 0 0 1 1425 602V612H1729V510H1878V701H1084z" fill="#bb9600" stroke="#7d8a30" stroke-width="1.500"/>
<!-- fingers -->
<g fill="#b8b0f8"><path d="M1203 614H1213V673H1203zM1205 673H1210V701H1205zM1750 613H1760V673H1750zM1752 673H1757V701H1752z"/></g>
<g stroke="#b8b0f8" fill="none">
<path stroke-width="10.500" d="M1239 612V676M1253.500 612V676M1268 612V676M1283 612V676M1297.500 612V676M1312 612V676M1327 612V676M1341.500 612V676M1356 612V676M1371 612V676M1385.500 612V676M1429.500 612V676M1444 612V676M1458.500 612V676M1473.500 612V676M1488 612V676M1518 612V676M1532.500 612V676M1547 612V676M1562 612V676M1576.500 612V676M1591 612V676M1606 612V676M1620.500 612V676M1635 612V676M1650 612V676M1664.500 612V676M1679 612V676M1708.500 612V676M1723 612V676M1503 612V662M1694 612V662"/>
<path stroke-width="5" d="M1239 676V701M1253.500 676V701M1268 676V701M1283 676V701M1297.500 676V701M1312 676V701M1327 676V701M1341.500 676V701M1356 676V701M1371 676V701M1385.500 676V701M1429.500 676V701M1444 676V701M1458.500 676V701M1473.500 676V701M1488 676V701M1503 676V701M1518 676V701M1532.500 676V701M1547 676V701M1562 676V701M1576.500 676V701M1591 676V701M1606 676V701M1620.500 676V701M1635 676V701M1650 676V701M1664.500 676V701M1679 676V701M1694 676V701M1708.500 676V701M1723 676V701"/>
</g>
<path d="M1232 670V686L1238 692H1388L1394 686V670M1423 670V686L1429 692H1725L1732 686V670" fill="none" stroke="#88844a" stroke-width="1"/>
<!-- thin gray -->
<path d="M1716 501H1836V529H1716zM1836 501L1938 513M1836 529L1921 543M1836 529L1921 599M1716 529L1921 800" fill="none" stroke="#aaa" stroke-width="1"/>
<path d="M1875 514L1938 513" stroke="#d02020" stroke-width="1.500"/>
<path d="M1019 513H1059V522M1059 612V630H1085" fill="none" stroke="#b02828" stroke-width="2"/>
<!-- mini window -->
<rect x="1921" y="520" width="17" height="323" rx="3" fill="#354a44" stroke="#888" stroke-width="1.500"/>
<rect x="1928" y="543" width="10" height="290" fill="#000"/>
<path d="M1928 565L1938 550M1928 575L1938 560M1928 605L1938 590M1928 615L1938 600M1928 655L1938 640M1928 662L1938 650" stroke="#1a30e0" stroke-width="4"/>
<rect x="1927" y="527" width="10" height="8" fill="#f0e8b0"/>
<rect x="1928" y="817" width="10" height="18" fill="#a0dcdc"/>
<rect x="1923" y="545" width="2" height="85" fill="#ddd"/>
<!-- red arrows -->
<path d="M1084 666H1226" stroke="#e81010" stroke-width="2.500" marker-end="url(#rd)"/>
<path d="M1874 632H1735" stroke="#e81010" stroke-width="2.500" marker-end="url(#rd)"/>
<path d="M1371 770V698" stroke="#c81818" stroke-width="2" marker-end="url(#rd)"/>
</svg>

<!-- embedded left panel UI -->
<div style="left:903px;top:379px;width:112px;height:12px;background:#a0dcdc;overflow:hidden"><span class="w" style="left:2px;top:0;font:bold 11.200px/12px 'Liberation Mono',monospace;color:#000">Job : 8s71v04qa0</span></div>
<div style="left:904px;top:392px;width:111px;height:12px;background:#a0dcdc;overflow:hidden"><span class="w" style="left:2px;top:0;font:bold 11.200px/12px 'Liberation Mono',monospace;color:#000">Step: cam</span></div>
<div style="left:904px;top:407px;width:111px;height:16px;background:#a0dcdc;box-shadow:inset -2px -2px 0 #4d8c86,inset 1px 1px 0 #c8f0ee"><span class="w" style="left:4px;top:2px;font:bold 11.200px/12px 'Liberation Mono',monospace;color:#000">Job Matrix ...</span></div>
<div style="left:906px;top:430px;width:89px;height:454px;background:#000"></div>
<div class="e" style="top:431px"><i></i><b class="wh">to</b><u></u></div>
<div class="e" style="top:443px"><i></i><span class="sw" style="background:#f00"></span><b class="g">ts</b><u></u></div>
<div class="e" style="top:458px"><i></i><b>cs.etch</b></div>
<div class="e" style="top:473px"><i></i><span class="sw" style="background:#0a30f0"></span><b class="o">cs</b><u></u></div>
<div class="e" style="top:488px"><i></i><b>pln2t</b></div>
<div class="e" style="top:504px"><i></i><b class="o">sig2t</b><u></u></div>
<div class="e" style="top:519px"><i></i><b>pln3b</b></div>
<div class="e" style="top:534px"><i></i><b class="o">sig3b</b><u></u></div>
<div class="e" style="top:549px"><i></i><b>pln4t</b></div>
<div class="e" style="top:564px"><i></i><b class="o">sig4t</b><u></u></div>
<div class="e" style="top:579px"><i></i><b>pln5b</b></div>
<div class="e" style="top:594px"><i></i><b class="o">sig5b</b><u></u></div>
<div class="e" style="top:609px"><i></i><b>pln6t</b></div>
<div class="e" style="top:624px"><i></i><b class="o">sig6t</b><u></u></div>
<div class="e" style="top:639px"><i></i><b>pln7b</b></div>
<div class="e" style="top:654px"><i></i><b class="o">sig7b</b><u></u></div>
<div class="e" style="top:669px"><i></i><b>ss.etch</b></div>
<div class="e" style="top:685px"><i></i><b class="o">ss</b><u></u></div>
<div class="e" style="top:696px"><i></i><b class="g">bs</b><u></u></div>
<div class="e" style="top:708px"><i></i><b class="wh">bo</b><u></u></div>
<div class="e" style="top:723px"><i></i><b style="background:#aaa">drl</b></div>
<div class="e" style="top:734px"><i></i><b style="background:#d4d4d4">rout</b></div>
<div class="e" style="top:749px"><i></i><b>bp</b></div>
<div class="e" style="top:761px"><i></i><b>dd</b></div>
<div class="e" style="top:772px"><i></i><b>tp</b></div>
<div class="e" style="top:784px"><i></i><b>ydkdrl</b></div>
<div class="e" style="top:795px"><i></i><b>cvia</b></div>
<div class="e" style="top:807px"><i></i><b>d</b></div>
<div class="e" style="top:819px"><i></i><b>cs.org</b></div>
<div class="e" style="top:830px"><i></i><b>ss.org</b></div>
<div class="e" style="top:841px"><i></i><b>te</b></div>
<div class="e" style="top:853px"><i></i><b>be</b></div>
<div class="e" style="top:864px"><i></i><span class="sw" style="background:#4a9a08"></span><b>cs1</b></div>
<div class="e" style="top:876px;height:8px;overflow:hidden"><i></i><b>ss1</b></div>

<!-- viewer window -->
<div style="left:1251px;top:350px;width:443px;height:203px;background:#b8b8b8;box-shadow:1px 1px 0 #333"></div>
<div style="left:1262px;top:350px;width:422px;height:187px;background:#fff"></div>
<div style="left:1252px;top:537px;width:441px;height:15px;background:#dcdcdc"></div>
<svg width="2048" height="560">
<rect x="1272" y="350" width="123" height="101" fill="#000"/>
<rect x="1272" y="350" width="123" height="2" fill="#e01010"/>
<g fill="#e81010">
<path d="M1272 365H1280V419H1272zM1367 372L1378 362H1395V395L1385 405L1370 410L1367 410z"/>
<path d="M1309 379V374A15 12 0 0 1 1339 374V379H1330V375A6 5 0 0 0 1318 375V379z"/>
</g>
<g fill="#bb9600"><path d="M1283 379H1300V423H1283zM1305 379H1323V423H1305zM1326 379H1342V423H1326zM1349 379H1365V423H1349z"/></g>
<path d="M1272 434H1360L1395 405M1272 441H1370L1395 420" fill="none" stroke="#e81010" stroke-width="2.500"/>
<path d="M1272 447H1395" stroke="#c01010" stroke-width="1.500"/>
<rect x="1395" y="350" width="98" height="101" fill="#0a22f0"/>
<path d="M1395 350H1493V372C1450 375 1420 385 1395 408z" fill="#ff1cff"/>
<path d="M1395 430C1430 395 1460 385 1493 382" fill="none" stroke="#e040e8" stroke-width="3"/>
<path d="M1395 440C1430 405 1460 398 1493 392" fill="none" stroke="#e040e8" stroke-width="2"/>
<path d="M1474 428L1490 413V420L1480 436z" fill="#ff70d8"/>
<rect x="1493" y="350" width="83" height="78" fill="#c8b4f4"/>
<path d="M1493 364H1576M1493 386H1576M1493 407H1576" stroke="#40b0f8" stroke-width="3"/>
<rect x="1493" y="428" width="83" height="23" fill="#40b8ff"/>
<rect x="1395" y="446" width="14" height="5" fill="#000"/>
<g fill="none" stroke="#4f6f96" stroke-width="3"><path d="M1366 408V502M1394 441V493M1491 441V485"/></g>
<path d="M1368 483H1392M1400 475H1484" stroke="#4f6f96" stroke-width="2"/>
<path d="M1398 475L1404 472V478zM1486 475L1480 472V478z" fill="#4f6f96"/>
<rect x="1262" y="536" width="422" height="1" fill="#aaa"/>
<rect x="1287" y="539" width="11" height="9" fill="#556" stroke="#333"/>
</svg>
<span class="w n" style="left:1363px;top:503px;font-size:14px;color:#556677;font-weight:bold">5mil</span>
<span class="w" style="left:1410px;top:495px;font:bold 11.500px/13px 'Liberation Serif','Noto Sans CJK SC',serif;color:#c84a40">干膜与金手指阻焊根部距离≥50mil（极限 19mil），</span>
<span class="w" style="left:1410px;top:513px;font:bold 11.500px/13px 'Liberation Serif','Noto Sans CJK SC',serif;color:#c84a40">不足 50mil，优先按距离焊盘 5mil 进行开窗↵</span>
<span class="w st" style="left:1259px">9/15</span>
<span class="w st" style="left:1301px">2018-08-25_144848.jpg</span>
<span class="w st" style="left:1411px">36.9 KB</span>
<span class="w st" style="left:1451px">561x349x24b jpeg</span>
<span class="w st" style="left:1538px">100%</span>
<span class="w st" style="left:1569px">双三次插值</span>
<span class="w st" style="left:1623px">已载入于 0.0 秒</span>

<!-- yellow arrows over viewer -->
<svg width="2048" height="1046" style="clip-path:polygon(896px 379px,1937px 379px,1937px 884px,896px 884px)" fill="none" stroke="#ffff30" stroke-width="2">
<path d="M1144 519L1173 530" marker-end="url(#y)"/>
<path d="M1157 547L1743 578" marker-end="url(#y)"/>
<path d="M1147 561L1391 605" marker-end="url(#y)"/>
<path d="M1432 545L1460 595" marker-end="url(#y)"/>
<path d="M1871 753L1937 729" marker-end="url(#y)"/>
</svg>

<!-- annotation boxes -->
<div class="box" style="left:1025px;top:520px;width:121px;height:94px"></div>
<div class="cn" style="left:1030px;top:525px;letter-spacing:1.5px">注意凹槽区</div><div class="cn" style="left:1030px;top:549px;letter-spacing:1.5px">域内也全部</div><div class="cn" style="left:1030px;top:571px;letter-spacing:1.5px">开通窗。</div>
<div class="box" style="left:1007px;top:711px;width:204px;height:83px"></div>
<div class="cn" style="left:1012px;top:716px">两侧距离板边手指</div><div class="cn" style="left:1012px;top:739px"><span>≥10mm</span>开通窗设计。</div>
<div class="box" style="left:1266px;top:775px;width:244px;height:55px"></div>
<div class="cn" style="left:1273px;top:780px;font-size:18px;font-weight:bold;color:#c02828;letter-spacing:.7px"><!-- -->距离板边最小<span style="font-size:18px">20mil</span>以内开</div><div class="cn" style="left:1273px;top:801px;font-size:18px;font-weight:bold;color:#c02828;letter-spacing:1.500px">通窗设计。</div>
<div class="box" style="left:1597px;top:719px;width:272px;height:170px;clip-path:inset(-5px -5px 6px -5px)"></div>
<div class="cn" style="left:1603px;top:724px">金手指镀硬金干膜比阻焊开</div>
<div class="cn" style="left:1603px;top:747px">窗单边＞<span>5mil</span>。注意阻焊边</div>
<div class="cn" style="left:1603px;top:771px">框线处也要加大单边＞<span>5mil</span></div>
<div class="cn" style="left:1603px;top:794px">的镀硬金干膜，效果如图。</div>

<!-- scrollbars and status -->
<div style="left:1937px;top:343px;width:18px;height:541px;background:#bcd7f8"></div>
<div style="left:1937px;top:371px;width:15px;height:459px;background:#7f9ec9"></div>
<svg width="2048" height="1046">
<path d="M1939 349H1950" stroke="#556e90" stroke-width="2"/>
<rect x="1939" y="354" width="12" height="11" fill="#e6eefa" stroke="#7a8ea8"/>
<path d="M1941 380H1951L1946 375z" fill="#4c6690"/><path d="M1941 821H1951L1946 827z" fill="#4c6690"/>
<rect x="1939" y="582" width="13" height="13" fill="#e4ecf8" stroke="#7f93b2"/><path d="M1941 586H1950M1941 588.500H1950M1941 591H1950" stroke="#778"/>
<path d="M1942 843H1949M1945.500 837L1949 841H1942z" fill="#222" stroke="#222"/>
<circle cx="1945" cy="857" r="3" fill="#999" stroke="#222"/>
<path d="M1942 871H1949M1945.500 878L1949 874H1942z" fill="#222" stroke="#222"/>
</svg>
<div style="left:834px;top:884px;width:1103px;height:17px;background:#7b9cc8"></div>
<div style="left:923px;top:886px;width:717px;height:13px;background:linear-gradient(#eff4fb,#c3d0e4 55%,#aeb9cc);border-radius:2px"></div>
<div style="left:1937px;top:884px;width:18px;height:17px;background:#bcd7f8"></div>
<div style="left:834px;top:901px;width:1121px;height:22px;background:linear-gradient(#dbe9fb,#c6dbf6 45%,#bad2f1 55%,#cfe1f8);border-top:1px solid #8aa8d0;box-sizing:border-box"></div>
<svg width="2048" height="1046">
<path d="M843 888V898L838 893z" fill="#3e5a80"/><path d="M1924 888V898L1929 893z" fill="#3e5a80"/>
<path d="M1277 888V897M1279 888V897M1281 888V897M1283 888V897" stroke="#66758c"/>
<path d="M900 903V922M980 903V922M1010 903V922M1088 903V922M1128 903V922" stroke="#a9c2e2"/>
<path d="M990 909L998 904L1004 912L996 918z" fill="#fff" stroke="#445"/><path d="M992 914L997 918L1004 908" stroke="#c09020" fill="none"/>
<rect x="1657" y="903" width="94" height="19" rx="2" fill="#d8e6f8" stroke="#90aad0"/>
<rect x="1658" y="904" width="19" height="17" fill="#ffd488"/>
<path d="M1662 907H1673V918H1662zM1664 910H1671M1664 913H1671M1664 916H1671M1681 907H1695V918H1681M1688 907V918M1701 907H1711V915H1701M1718 908H1729M1722 912H1729M1718 916H1729M1737 908H1749M1737 912H1749M1737 916H1749" fill="none" stroke="#445"/>
<circle cx="1709" cy="916" r="3" fill="#2a8a9a"/>
<circle cx="1807" cy="912" r="7" fill="#e4edf9" stroke="#6f86a8"/><path d="M1803 912H1811" stroke="#334" stroke-width="1.800"/>
<path d="M1815 912H1918" stroke="#8ea8cc" stroke-width="1"/><path d="M1868 908V916" stroke="#7a90b0"/>
<path d="M1873 906H1882V914L1877.500 918L1873 914z" fill="#e8eff9" stroke="#5f7898"/>
<circle cx="1926" cy="912" r="7" fill="#e4edf9" stroke="#6f86a8"/><path d="M1922 912H1930M1926 908V916" stroke="#334" stroke-width="1.800"/>
<path d="M1945 918H1947M1949 918H1951M1949 914H1951M1952 918H1954M1952 914H1954M1952 910H1954" stroke="#7a8ea8" stroke-width="2"/>
</svg>
<span class="w sb" style="left:842px">页面: 4/8</span>
<span class="w sb" style="left:909px">字数: 3,098</span>
<span class="w sb" style="left:1022px">英语(美国)</span>
<span class="w sb" style="left:1096px">插入</span>
<span class="w sb" style="left:1760px">196%</span>
</body></html>
